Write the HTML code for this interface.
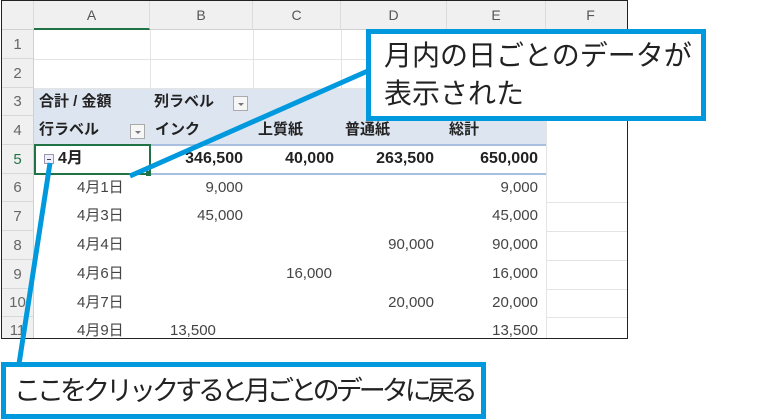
<!DOCTYPE html>
<html><head><meta charset="utf-8"><style>
body{margin:0;width:783px;height:419px;background:#fff;position:relative;overflow:hidden;font-family:"Liberation Sans","Noto Sans CJK JP",sans-serif;}
.a{position:absolute;white-space:nowrap;}
.sheet{position:absolute;left:1px;top:0;width:627px;height:339px;border:1px solid #222;border-top:1px solid #222;box-sizing:border-box;overflow:hidden;background:#fff}
.ch{position:absolute;top:0;height:29px;background:#f0f0f0;border-right:1px solid #dcdcdc;border-bottom:1px solid #d0d0d0;box-sizing:border-box;color:#555;font-size:14px;text-align:center;line-height:29px}
.rh{position:absolute;left:0;width:32px;background:#f0f0f0;border-bottom:1px solid #d8d8d8;border-right:1px solid #d0d0d0;box-sizing:border-box;color:#666;font-size:15px;text-align:center}
.hl{position:absolute;left:32px;height:1px;background:#e4e4e4;width:600px}
.vl{position:absolute;top:29px;width:1px;background:#e4e4e4;height:320px}
.t{position:absolute;font-size:15px;color:#444;line-height:28px;white-space:nowrap}
.b{font-weight:bold;color:#222}
.r{text-align:right}
.dd{position:absolute;width:15px;height:15px;border:1px solid #aaa;box-sizing:border-box;background:#f6f6f6}
.dd:after{content:"";position:absolute;left:4px;top:6px;border-left:3px solid transparent;border-right:3px solid transparent;border-top:3px solid #777}
.box{position:absolute;border:5px solid #0099dd;background:#fff;box-sizing:border-box;color:#222;white-space:nowrap;font-family:"Liberation Sans","Noto Sans CJK JP",sans-serif}
</style></head><body>
<div class="sheet">
<div class="ch" style="left:0;width:32px"></div>
<div class="ch" style="left:32px;width:116px;border-bottom:2px solid #217346">A</div>
<div class="ch" style="left:148px;width:103px">B</div>
<div class="ch" style="left:251px;width:88px">C</div>
<div class="ch" style="left:339px;width:106px">D</div>
<div class="ch" style="left:445px;width:99px">E</div>
<div class="ch" style="left:544px;width:90px">F</div>
<div style="position:absolute;left:32px;top:87px;width:512px;height:57px;background:#dde5f1"></div>
<div style="position:absolute;left:32px;top:143px;width:512px;height:2px;background:#a8c0e0"></div>
<div style="position:absolute;left:32px;top:172px;width:512px;height:2px;background:#a8c0e0"></div>
<div class="vl" style="left:148px;height:58px"></div><div class="vl" style="left:251px;height:58px"></div><div class="vl" style="left:339px;height:58px"></div><div class="vl" style="left:445px;height:58px"></div><div class="vl" style="left:544px"></div>
<div class="hl" style="top:58px"></div><div class="hl" style="top:87px"></div><div class="hl" style="top:201px;left:544px"></div><div class="hl" style="top:230px;left:544px"></div><div class="hl" style="top:259px;left:544px"></div><div class="hl" style="top:288px;left:544px"></div><div class="hl" style="top:316px;left:544px"></div>
<div class="rh" style="top:29px;height:29px;line-height:29px">1</div>
<div class="rh" style="top:58px;height:29px;line-height:29px">2</div>
<div class="rh" style="top:87px;height:28px;line-height:28px">3</div>
<div class="rh" style="top:115px;height:29px;line-height:29px">4</div>
<div class="rh" style="top:144px;height:29px;line-height:29px;color:#217346">5</div>
<div class="rh" style="top:173px;height:28px;line-height:28px">6</div>
<div class="rh" style="top:201px;height:29px;line-height:29px">7</div>
<div class="rh" style="top:230px;height:29px;line-height:29px">8</div>
<div class="rh" style="top:259px;height:29px;line-height:29px">9</div>
<div class="rh" style="top:288px;height:28px;line-height:28px">10</div>
<div class="rh" style="top:316px;height:28px;line-height:28px">11</div>
<div class="t b" style="left:37px;top:87px">合計 / 金額</div>
<div class="t b" style="left:152px;top:87px">列ラベル</div>
<div class="dd" style="left:231px;top:95px"></div>
<div class="t b" style="left:37px;top:115px">行ラベル</div>
<div class="dd" style="left:128px;top:123px"></div>
<div class="t b" style="left:153px;top:115px">インク</div>
<div class="t b" style="left:256px;top:115px">上質紙</div>
<div class="t b" style="left:343px;top:115px">普通紙</div>
<div class="t b" style="left:447px;top:115px">総計</div>
<div style="position:absolute;left:32px;top:143px;width:117px;height:31px;border:2px solid #217346;box-sizing:border-box"></div>
<div style="position:absolute;left:144px;top:170px;width:5px;height:5px;background:#217346"></div>
<div style="position:absolute;left:42px;top:153px;width:10px;height:10px;border:1px solid #99a;background:#eef;box-sizing:border-box"><div style="position:absolute;left:2px;top:4px;width:4px;height:1px;background:#444"></div></div>
<div class="t b" style="left:56px;top:144px;font-size:16px">4月</div>
<div class="t b r" style="left:148px;width:93px;top:144px;font-size:16px">346,500</div>
<div class="t b r" style="left:251px;width:81px;top:144px;font-size:16px">40,000</div>
<div class="t b r" style="left:339px;width:93px;top:144px;font-size:16px">263,500</div>
<div class="t b r" style="left:445px;width:91px;top:144px;font-size:16px">650,000</div>
<div class="t" style="left:75px;top:173px">4月1日</div><div class="t r" style="left:148px;width:93px;top:173px">9,000</div><div class="t r" style="left:445px;width:91px;top:173px">9,000</div>
<div class="t" style="left:75px;top:201px">4月3日</div><div class="t r" style="left:148px;width:93px;top:201px">45,000</div><div class="t r" style="left:445px;width:91px;top:201px">45,000</div>
<div class="t" style="left:75px;top:230px">4月4日</div><div class="t r" style="left:339px;width:93px;top:230px">90,000</div><div class="t r" style="left:445px;width:91px;top:230px">90,000</div>
<div class="t" style="left:75px;top:259px">4月6日</div><div class="t r" style="left:251px;width:79px;top:259px">16,000</div><div class="t r" style="left:445px;width:91px;top:259px">16,000</div>
<div class="t" style="left:75px;top:288px">4月7日</div><div class="t r" style="left:339px;width:93px;top:288px">20,000</div><div class="t r" style="left:445px;width:91px;top:288px">20,000</div>
<div class="t" style="left:75px;top:316px">4月9日</div><div class="t" style="left:168px;top:316px">13,500</div><div class="t r" style="left:445px;width:91px;top:316px">13,500</div>
</div>
<svg class="a" style="left:0;top:0" width="783" height="419"><line x1="130" y1="176" x2="370" y2="70" stroke="#0099dd" stroke-width="5"/><line x1="50" y1="163" x2="19" y2="364" stroke="#0099dd" stroke-width="5"/></svg>
<div class="box" style="left:366px;top:29px;width:340px;height:92px;padding:3px 0 0 13px;font-size:28px;line-height:38px">月内の日ごとのデータが<br>表示された</div>
<div class="box" style="left:1px;top:362px;width:485px;height:57px;padding:0 0 0 8px;font-size:27px;letter-spacing:-4px;line-height:48px">ここをクリックすると月ごとのデータに戻る</div>
</body></html>
